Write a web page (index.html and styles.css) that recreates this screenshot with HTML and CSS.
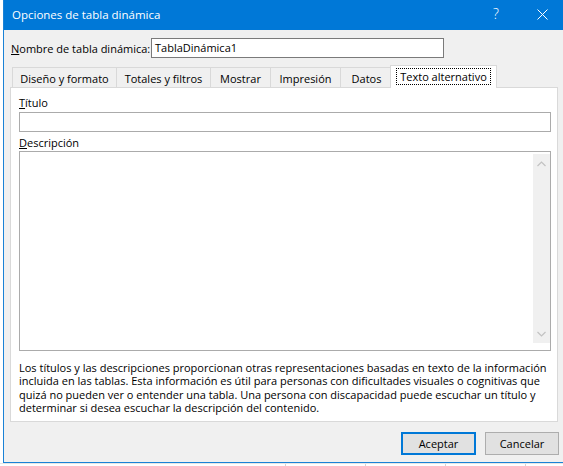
FILE: index.html
```html
<!DOCTYPE html>
<html lang="es">
<head>
<meta charset="utf-8">
<title>Opciones de tabla dinámica</title>
<link rel="stylesheet" href="styles.css">
</head>
<body>
<div class="screen">
  <div class="dialog">
    <div class="titlebar">
      <span class="title">Opciones de tabla dinámica</span>
      <div class="caption-btns">
        <span class="cap-btn help">?</span>
        <span class="cap-btn close">
          <svg width="11" height="11" viewBox="0 0 11 11"><path d="M0.5 0.5 L10.5 10.5 M10.5 0.5 L0.5 10.5" stroke="#fff" stroke-width="1" fill="none"/></svg>
        </span>
      </div>
    </div>
    <div class="content">
      <div class="name-row">
        <span class="name-label"><u>N</u>ombre de tabla dinámica:</span>
        <div class="field name-field">TablaDinámica1</div>
      </div>
      <div class="tabs">
        <div class="tab t1">Diseño y formato</div>
        <div class="tab t2">Totales y filtros</div>
        <div class="tab t3">Mostrar</div>
        <div class="tab t4">Impresión</div>
        <div class="tab t5">Datos</div>
        <div class="tab selected"><span class="focus">Texto alternativo</span></div>
      </div>
      <div class="panel">
        <div class="lbl"><u>T</u>ítulo</div>
        <div class="field title-field"></div>
        <div class="lbl lbl-desc"><u>D</u>escripción</div>
        <div class="field desc-field">
          <div class="scrollbar">
            <svg class="arrow" width="9" height="6" viewBox="0 0 9 6"><path d="M0.5 5 L4.5 1 L8.5 5" stroke="#c2c2c2" stroke-width="1.2" fill="none"/></svg>
            <svg class="arrow" width="9" height="6" viewBox="0 0 9 6"><path d="M0.5 1 L4.5 5 L8.5 1" stroke="#c2c2c2" stroke-width="1.2" fill="none"/></svg>
          </div>
        </div>
        <p class="info">Los títulos y las descripciones proporcionan otras representaciones basadas en texto de la información incluida en las tablas. Esta información es útil para personas con dificultades visuales o cognitivas que quizá no pueden ver o entender una tabla. Una persona con discapacidad puede escuchar un título y determinar si desea escuchar la descripción del contenido.</p>
      </div>
      <div class="buttons">
        <div class="btn default">Aceptar</div>
        <div class="btn cancel">Cancelar</div>
      </div>
    </div>
  </div>
  <div class="sheet-strip">
    <span class="gridline g1"></span>
    <span class="gridline g2"></span>
    <span class="gridline g3"></span>
    <span class="gridline g4"></span>
  </div>
</div>
</body>
</html>
```
FILE: styles.css
```css
* { box-sizing: border-box; }
html, body { margin: 0; padding: 0; }
body {
  width: 563px;
  height: 466px;
  overflow: hidden;
  background: #ffffff;
  font-family: "Open Sans", "Noto Sans", sans-serif;
  font-size: 11px;
  color: #000;
}
.screen { width: 563px; height: 466px; overflow: hidden; }

.dialog {
  margin-left: 3px;
  width: 562px;
  height: 463px;
  border-left: 1px solid #1a82d6;
  border-bottom: 1px solid #1a82d6;
  background: #f0f0f0;
  display: flex;
  flex-direction: column;
}

.titlebar {
  height: 30px;
  flex: none;
  background: #0078d7;
  color: #fff;
  display: flex;
  align-items: center;
  padding-left: 8px;
}
.title { font-size: 11.5px; line-height: 16px; }
.caption-btns { margin-left: auto; display: flex; height: 30px; }
.cap-btn {
  width: 46px;
  height: 30px;
  display: flex;
  align-items: center;
  justify-content: center;
}
.help { font-size: 14px; font-weight: 300; line-height: 1; padding-bottom: 2px; }
.close svg { display: block; margin-top: -1px; }

.content {
  flex: 1;
  padding: 8px 0 0 6px;
  display: flex;
  flex-direction: column;
}

.name-row { display: flex; align-items: center; height: 20px; padding-left: 1px; }
.name-label { width: 140px; line-height: 15px; }
.field { background: #fff; border: 1px solid #ababab; }
.name-field {
  width: 293px;
  height: 20px;
  border-color: #7a7a7a;
  padding-left: 3px;
  line-height: 18px;
}

.tabs {
  margin-top: 7px;
  height: 22px;
  display: flex;
  align-items: flex-end;
  padding-left: 2px;
  position: relative;
  z-index: 1;
}
.tab {
  height: 20px;
  border: 1px solid #d9d9d9;
  border-bottom: none;
  margin-left: -1px;
  display: flex;
  align-items: center;
  justify-content: center;
  line-height: 15px;
  padding-top: 1px;
}
.tab:first-child { margin-left: 0; }
.t1 { width: 105px; }
.t2 { width: 95px; }
.t3 { width: 61px; }
.t4 { width: 71px; }
.t5 { width: 53px; }
.tab.selected {
  width: 107px;
  height: 23px;
  margin-left: -3px;
  margin-bottom: -1px;
  background: #fff;
  align-items: flex-start;
  padding-top: 2px;
}
.focus {
  display: block;
  width: 95px;
  height: 17px;
  border: 1px dotted #000;
  text-align: center;
  line-height: 15px;
}

.panel {
  width: 548px;
  height: 335px;
  background: #fff;
  border: 1px solid #d9d9d9;
  padding: 7px 6px 0 8px;
}
.lbl { line-height: 15px; }
.title-field { width: 532px; height: 20px; margin-top: 2px; }
.lbl-desc { margin-top: 3px; }
.desc-field {
  width: 532px;
  height: 200px;
  margin-top: 1px;
  padding: 2px 0 7px 0;
  display: flex;
  justify-content: flex-end;
}
.scrollbar {
  width: 17px;
  height: 100%;
  background: #f0f0f0;
  display: flex;
  flex-direction: column;
  justify-content: space-between;
  align-items: center;
  padding: 7px 0 6px;
}
.arrow { display: block; }

.info {
  margin: 10px 0 0;
  line-height: 13.3px;
  width: 532px;
}

.buttons {
  margin-top: 10px;
  width: 549px;
  display: flex;
  justify-content: flex-end;
  gap: 9px;
}
.btn {
  height: 23px;
  background: #e1e1e1;
  border: 1px solid #adadad;
  display: flex;
  align-items: center;
  justify-content: center;
  line-height: 15px;
}
.btn.default { width: 75px; border: 2px solid #0078d7; }
.btn.cancel { width: 74px; }

.sheet-strip {
  height: 3px;
  position: relative;
  background: #fff;
  border-top: 1px solid #e6e6e6;
}
.gridline {
  position: absolute;
  top: 0;
  bottom: 0;
  width: 1px;
  background: #d4d4d4;
}
.g1 { left: 285px; }
.g2 { left: 365px; }
.g3 { left: 445px; }
.g4 { left: 525px; }
```
